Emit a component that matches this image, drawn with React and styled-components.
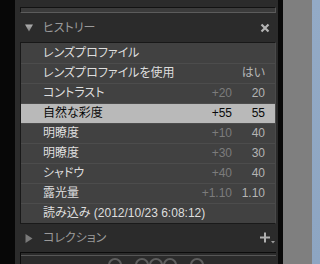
import React from 'react';
import styled, { createGlobalStyle } from 'styled-components';

const GlobalStyle = createGlobalStyle`
  html, body {
    margin: 0;
    padding: 0;
    background: #2b2b2b;
    overflow: hidden;
  }
  body {
    font-family: "Liberation Sans", "Noto Sans CJK JP", sans-serif;
    font-feature-settings: "palt";
  }
`;

const Screen = styled.div`
  display: flex;
  width: 320px;
  height: 264px;
  overflow: hidden;
`;

const Gutter = styled.div`
  width: 15px;
  flex: none;
  background: #070707;
`;

const Panel = styled.div`
  width: 263px;
  flex: none;
  box-sizing: border-box;
  padding: 7px 2px 0 5px;
  background: #2b2b2b;
  display: flex;
  flex-direction: column;
  overflow: hidden;
`;

const PrevBox = styled.div`
  height: 6px;
  flex: none;
  background: #3b3b3b;
  border-top: 1px solid #121212;
  border-left: 1px solid #121212;
  border-right: 1px solid #575757;
  border-bottom: 1px solid #5c5c5c;
  box-sizing: border-box;
`;

const Header = styled.div`
  height: ${(p) => p.h}px;
  flex: none;
  display: flex;
  align-items: center;
  padding: 0 ${(p) => p.pr}px 0 5px;
  font-size: 12px;
  color: #9a9a9a;
`;

const Title = styled.span`
  flex: 1;
  margin-left: 10px;
  line-height: 14px;
`;

const ListBox = styled.div`
  flex: none;
  background: #414141;
  border: 1px solid #181818;
  border-right-color: #4a4a4a;
  border-bottom-color: #1a1a1a;
`;

const Row = styled.div`
  height: 20px;
  box-sizing: border-box;
  display: flex;
  align-items: center;
  padding-bottom: 2px;
  border-top: 1px solid ${(p) => (p.first ? '#414141' : '#4c4c4c')};
  background: ${(p) => (p.selected ? '#b9b9b9' : 'transparent')};
  font-size: 12px;
  line-height: 14px;
  color: ${(p) => (p.selected ? '#0a0a0a' : '#dedede')};
`;

const Label = styled.span`
  flex: 1;
  padding-left: 22px;
  white-space: nowrap;
`;

const Delta = styled.span`
  width: 40px;
  margin-right: 3px;
  text-align: right;
  color: ${(p) => (p.selected ? '#0a0a0a' : '#7c7c7c')};
`;

const Value = styled.span`
  width: 30px;
  padding-right: 10px;
  text-align: right;
  color: ${(p) => (p.selected ? '#0a0a0a' : '#b4b4b4')};
`;

const NextBox = styled.div`
  flex: none;
  height: 20px;
  border-top: 1px solid #0c0c0c;
  border-left: 1px solid #0c0c0c;
  overflow: hidden;
  &::before {
    content: '';
    display: block;
    height: 1px;
    margin-top: 2px;
    background: #565656;
  }
`;

const Marks = styled.svg`
  display: block;
  margin: 0 0 0 84px;
`;

const Divider = styled.div`
  width: 5px;
  flex: none;
  background: #0a0a0a;
`;

const GrayStrip = styled.div`
  width: 29px;
  flex: none;
  background: #7f7f7f;
`;

const BlueStrip = styled.div`
  flex: 1;
  background: linear-gradient(180deg, #93aac6 0%, #8da5c2 100%);
`;

const Down = () => (
  <svg width="8" height="8" viewBox="0 0 8 8">
    <defs>
      <linearGradient id="tg" x1="0" y1="0" x2="0" y2="1">
        <stop offset="0" stopColor="#b0b0b0" />
        <stop offset="1" stopColor="#7a7a7a" />
      </linearGradient>
    </defs>
    <path d="M0 0.5 L8 0.5 L4 7.5 Z" fill="url(#tg)" />
  </svg>
);

const Right = () => (
  <svg width="8" height="9" viewBox="0 0 8 9">
    <path d="M0.5 0 L7.5 4.5 L0.5 9 Z" fill="#7a7a7a" />
  </svg>
);

const Close = () => (
  <svg width="10" height="10" viewBox="0 0 10 10">
    <path d="M1.5 1.5 L8.5 8.5 M8.5 1.5 L1.5 8.5" stroke="#b4b4b4" strokeWidth="2.2" />
  </svg>
);

const Plus = () => (
  <svg width="15" height="12" viewBox="0 0 15 12">
    <path d="M5 0.5 V10.5 M0 5.5 H10" stroke="#b0b0b0" strokeWidth="2" />
    <path d="M11 9 L15 9 L13 11.5 Z" fill="#9a9a9a" />
  </svg>
);

const history = [
  { label: 'レンズプロファイル' },
  { label: 'レンズプロファイルを使用', value: 'はい' },
  { label: 'コントラスト', delta: '+20', value: '20' },
  { label: '自然な彩度', delta: '+55', value: '55', selected: true },
  { label: '明瞭度', delta: '+10', value: '40' },
  { label: '明瞭度', delta: '+30', value: '30' },
  { label: 'シャドウ', delta: '+40', value: '40' },
  { label: '露光量', delta: '+1.10', value: '1.10' },
  { label: '読み込み (2012/10/23 6:08:12)' },
];

export default function App() {
  return (
    <Screen>
      <GlobalStyle />
      <Gutter />
      <Panel>
        <PrevBox />
        <Header h={29} pr={6}>
          <Down />
          <Title>ヒストリー</Title>
          <Close />
        </Header>
        <ListBox>
          {history.map((item, i) => (
            <Row key={i} first={i === 0} selected={item.selected}>
              <Label>{item.label}</Label>
              <Delta selected={item.selected}>{item.delta}</Delta>
              <Value selected={item.selected}>{item.value}</Value>
            </Row>
          ))}
        </ListBox>
        <Header h={28} pr={1}>
          <Right />
          <Title>コレクション</Title>
          <Plus />
        </Header>
        <NextBox>
          <Marks width="110" height="14" viewBox="0 0 110 14">
            <g fill="none" stroke="#5e5e5e" strokeWidth="2">
              <circle cx="10" cy="9" r="6" />
              <circle cx="37" cy="9" r="6" />
              <circle cx="51" cy="9" r="6" />
              <circle cx="65" cy="9" r="6" />
              <circle cx="92" cy="9" r="6" />
            </g>
          </Marks>
        </NextBox>
      </Panel>
      <Divider />
      <GrayStrip />
      <BlueStrip />
    </Screen>
  );
}
